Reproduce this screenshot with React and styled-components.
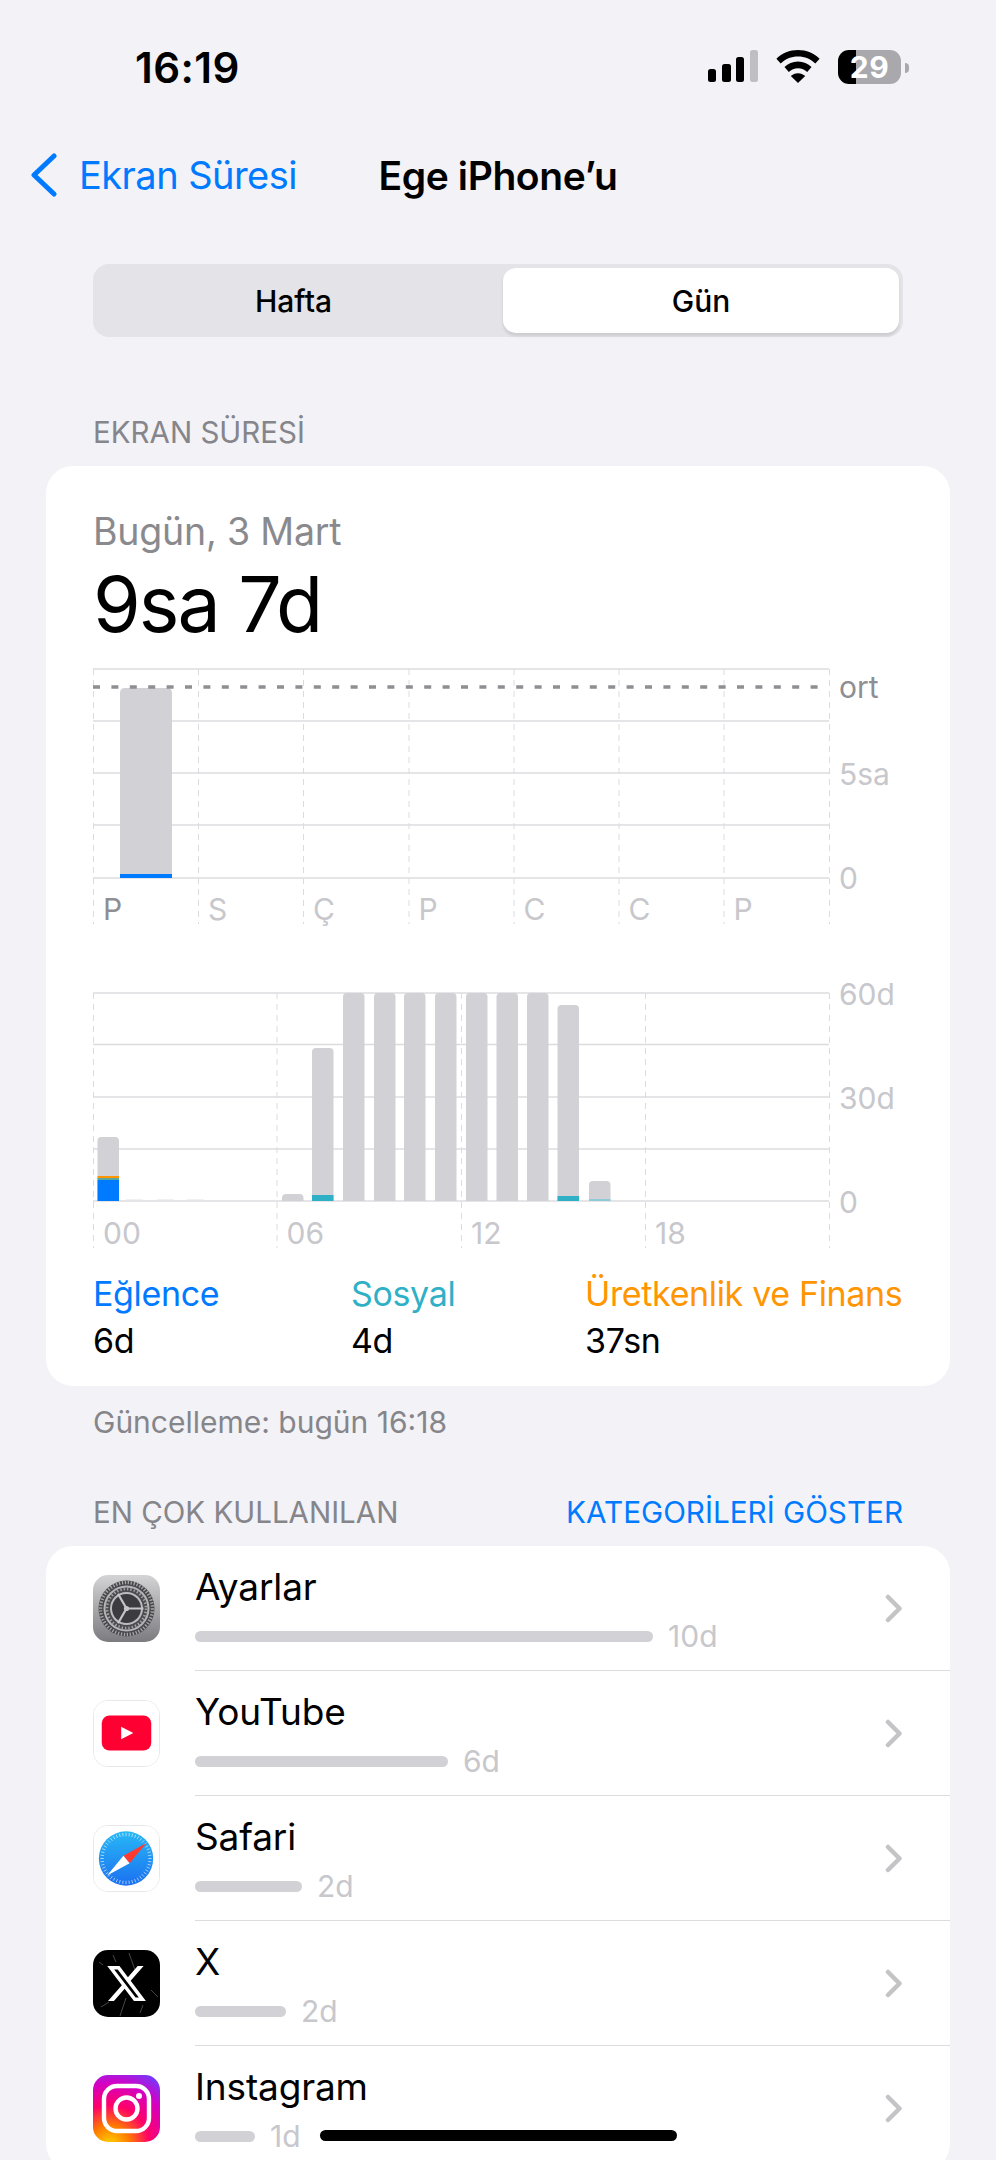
import React from "react";
import styled, { createGlobalStyle } from "styled-components";
import { FaXTwitter } from "react-icons/fa6";

const BLUE = "#007aff";
const TEAL = "#30b0c7";
const ORANGE = "#ff9500";
const BAR = "#d1d1d6";
const GRID = "#dcdcdf";
const AXIS = "#c7c7cc";

const GlobalStyle = createGlobalStyle`
  html, body {
    margin: 0;
    padding: 0;
    background: #f2f2f7;
  }
  body {
    font-family: Inter, "Liberation Sans", sans-serif;
  }
`;

const Page = styled.div`
  position: relative;
  width: 996px;
  height: 2160px;
  overflow: hidden;
  background: #f2f2f7;
  color: #000;
`;

const StatusBar = styled.div`
  height: 134px;
  box-sizing: border-box;
  padding: 0 87px 0 135px;
  display: flex;
  align-items: center;
  justify-content: space-between;
`;

const Clock = styled.div`
  font-size: 42px;
  font-weight: 600;
  letter-spacing: 0.4px;
`;

const StatusIcons = styled.div`
  display: flex;
  align-items: center;
  gap: 18px;
  margin-top: -1px;
`;

const Battery = styled.div`
  position: relative;
  width: 63px;
  height: 34px;
  margin-right: 8px;
  border-radius: 11px;
  background: linear-gradient(90deg, #000 0 18px, #a9a9ad 18px);
  color: #fff;
  font-size: 30px;
  font-weight: 700;
  line-height: 34px;
  text-align: center;
  letter-spacing: 0.5px;

  &::after {
    content: "";
    position: absolute;
    right: -8px;
    top: 13px;
    width: 4px;
    height: 10px;
    border-radius: 0 4px 4px 0;
    background: #a9a9ad;
  }
`;

const Nav = styled.div`
  height: 82px;
  display: grid;
  grid-template-columns: 1fr auto 1fr;
  align-items: center;
`;

const BackLink = styled.div`
  display: flex;
  align-items: center;
  gap: 22px;
  padding-left: 30px;
  color: ${BLUE};
  font-size: 38px;
  letter-spacing: -0.55px;
  white-space: nowrap;
`;

const NavTitle = styled.div`
  font-size: 39px;
  font-weight: 600;
  letter-spacing: -0.4px;
`;

const Segmented = styled.div`
  margin: 48px 93px 0;
  height: 73px;
  box-sizing: border-box;
  padding: 4px;
  display: grid;
  grid-template-columns: 1fr 396px;
  gap: 4px;
  border-radius: 16px;
  background: #e3e3e8;
`;

const Segment = styled.div`
  display: flex;
  align-items: center;
  justify-content: center;
  padding-right: ${(p) => (p.$active ? 0 : 9)}px;
  border-radius: 13px;
  font-size: 30px;
  font-weight: 500;
  background: ${(p) => (p.$active ? "#fff" : "transparent")};
  box-shadow: ${(p) => (p.$active ? "0 3px 3px rgba(0,0,0,0.1)" : "none")};
`;

const SectionHeader = styled.div`
  margin: ${(p) => p.$top}px 93px 14px;
  height: 40px;
  display: flex;
  align-items: center;
  justify-content: space-between;
  color: #85858a;
  font-size: 29.5px;
`;

const HeaderLink = styled.span`
  color: ${BLUE};
  font-size: 29.7px;
`;

const Card = styled.div`
  margin: 0 46px;
  background: #fff;
  border-radius: 27px;
  overflow: hidden;
`;

const SummaryCard = styled(Card)`
  padding: 44px 47px 22px;
`;

const DateLine = styled.div`
  color: #8a8a8e;
  font-size: 37.5px;
  line-height: 44px;
  letter-spacing: -0.2px;
`;

const Total = styled.div`
  margin-top: 5px;
  font-size: 77px;
  line-height: 90px;
  letter-spacing: -2px;
`;

const ChartSvg = styled.svg`
  display: block;
  width: 836px;
  height: 262px;
  margin-top: ${(p) => p.$top}px;
  overflow: visible;
  font-family: Inter, "Liberation Sans", sans-serif;
`;

const Legend = styled.div`
  margin-top: 21px;
  display: grid;
  grid-template-columns: 258px 234px auto;
`;

const LegendLabel = styled.div`
  color: ${(p) => p.$color};
  font-size: 34px;
  line-height: 46px;
  letter-spacing: -0.35px;
  white-space: nowrap;
`;

const LegendValue = styled.div`
  margin-top: 1px;
  font-size: 34px;
  line-height: 46px;
  letter-spacing: -0.35px;
`;

const Updated = styled.div`
  margin: 16px 93px 0;
  color: #85858a;
  font-size: 30px;
  line-height: 40px;
`;

const Row = styled.div`
  display: flex;
  align-items: center;
  gap: 35px;
  height: 125px;
  padding-left: 47px;
`;

const IconBox = styled.div`
  flex: none;
  width: 67px;
  height: 67px;
  box-sizing: border-box;
  border-radius: 15px;
  overflow: hidden;
  border: ${(p) => (p.$outlined ? "1px solid #e8e8ea" : "none")};

  > svg {
    display: block;
    width: 100%;
    height: 100%;
  }
`;

const RowBody = styled.div`
  flex: 1;
  align-self: stretch;
  display: flex;
  align-items: center;
  justify-content: space-between;
  padding-right: 46px;
  border-bottom: 1.5px solid #dcdcdf;
  box-sizing: border-box;
`;

const RowText = styled.div`
  align-self: flex-start;
  padding-top: 19px;
`;

const AppName = styled.div`
  font-size: 37px;
  line-height: 44px;
  letter-spacing: -0.15px;
`;

const Usage = styled.div`
  margin-top: 7px;
  height: 40px;
  display: flex;
  align-items: center;
  gap: 15px;
`;

const UsageBar = styled.div`
  width: ${(p) => p.$width}px;
  height: 11px;
  border-radius: 6px;
  background: ${BAR};
`;

const UsageValue = styled.div`
  color: ${AXIS};
  font-size: 30px;
`;

const HomeIndicator = styled.div`
  position: absolute;
  left: 320px;
  top: 2130px;
  width: 357px;
  height: 11px;
  border-radius: 6px;
  background: #000;
`;

const SignalIcon = () => (
  <svg width="50" height="33" viewBox="0 0 50 33">
    <rect x="0" y="19" width="8" height="13" rx="2.5" />
    <rect x="14" y="14" width="9" height="18" rx="2.5" />
    <rect x="28" y="7" width="8" height="25" rx="2.5" />
    <rect x="42" y="0" width="8" height="32" rx="2.5" fill="#bfbfc3" />
  </svg>
);

const WifiIcon = () => (
  <svg width="44" height="33" viewBox="0 0 44 33">
    <path d="M22 0C13.6 0 6 3.3.4 8.7l4.3 4.9C9.2 9.2 15.3 6.6 22 6.6s12.8 2.6 17.3 7l4.3-4.9C38 3.3 30.4 0 22 0z" />
    <path d="M22 11.6c-5.3 0-10 2.1-13.5 5.5l4.3 4.9c2.4-2.3 5.6-3.7 9.2-3.7s6.8 1.4 9.2 3.7l4.3-4.9C32 13.7 27.3 11.6 22 11.6z" />
    <path d="M22 23.2c-2.8 0-5.3 1.1-7.2 2.9L22 33l7.2-6.9c-1.9-1.8-4.4-2.9-7.2-2.9z" />
  </svg>
);

const BackChevron = () => (
  <svg width="27" height="44" viewBox="0 0 27 44">
    <path d="M24 3 4 22l20 19" fill="none" stroke={BLUE} strokeWidth="5" strokeLinecap="round" strokeLinejoin="round" />
  </svg>
);

const RowChevron = () => (
  <svg width="22" height="30" viewBox="0 0 22 30">
    <path d="M6 4l11.5 11.5L6 27" fill="none" stroke="#c4c4c7" strokeWidth="4.5" strokeLinecap="round" strokeLinejoin="round" />
  </svg>
);

const SettingsIcon = () => {
  const spokes = [0, 120, 240];
  return (
    <svg viewBox="0 0 67 67">
      <defs>
        <linearGradient id="settingsBg" x1="0" y1="0" x2="0" y2="1">
          <stop offset="0" stopColor="#d4d4d6" />
          <stop offset="1" stopColor="#7c7c80" />
        </linearGradient>
      </defs>
      <rect width="67" height="67" fill="url(#settingsBg)" />
      <circle cx="33.5" cy="33.5" r="28" fill="#47474b" />
      <circle cx="33.5" cy="33.5" r="26" fill="none" stroke="#a8a8ac" strokeWidth="3.4" strokeDasharray="1.3 1.7" />
      <circle cx="33.5" cy="33.5" r="23" fill="#b5b5b8" />
      <circle cx="33.5" cy="33.5" r="21" fill="#4c4c50" />
      <circle cx="33.5" cy="33.5" r="19.5" fill="none" stroke="#a4a4a8" strokeWidth="2.6" strokeDasharray="1.4 2" />
      <circle cx="33.5" cy="33.5" r="16.5" fill="#bdbdc0" />
      <circle cx="33.5" cy="33.5" r="14.5" fill="#3c3c40" />
      {spokes.map((a) => (
        <line
          key={a}
          x1="33.5"
          y1="33.5"
          x2={33.5 + 17 * Math.cos((a * Math.PI) / 180)}
          y2={33.5 - 17 * Math.sin((a * Math.PI) / 180)}
          stroke="#c6c6ca"
          strokeWidth="2.2"
        />
      ))}
      <circle cx="33.5" cy="33.5" r="2.6" fill="#c6c6ca" />
    </svg>
  );
};

const YoutubeIcon = () => (
  <svg viewBox="0 0 67 67">
    <rect width="67" height="67" fill="#fff" />
    <rect x="8" y="15" width="51" height="36" rx="8" fill="#ff0033" />
    <path d="M28 26.5v13l12.5-6.5z" fill="#fff" />
  </svg>
);

const SafariIcon = () => {
  const ticks = Array.from({ length: 48 }, (_, i) => (i * 2 * Math.PI) / 48);
  return (
    <svg viewBox="0 0 67 67">
      <defs>
        <linearGradient id="safariBg" x1="0" y1="0" x2="0" y2="1">
          <stop offset="0" stopColor="#28b8f6" />
          <stop offset="1" stopColor="#1b70f0" />
        </linearGradient>
      </defs>
      <rect width="67" height="67" fill="#fff" />
      <circle cx="33" cy="33.5" r="28" fill="url(#safariBg)" />
      {ticks.map((t, i) => (
        <line
          key={i}
          x1={33 + 26.5 * Math.cos(t)}
          y1={33.5 + 26.5 * Math.sin(t)}
          x2={33 + 23 * Math.cos(t)}
          y2={33.5 + 23 * Math.sin(t)}
          stroke="#fff"
          strokeOpacity="0.75"
          strokeWidth="0.8"
        />
      ))}
      <path d="M54 17.5 36.7 38.3 30.3 30.7z" fill="#ff3b30" />
      <path d="M13.5 51 30.3 30.7 36.7 38.3z" fill="#fff" />
    </svg>
  );
};

const XIcon = () => (
  <svg viewBox="0 0 67 67">
    <rect width="67" height="67" fill="#000" />
    <path
      d="M36 3l6 17M33 48l-6 18M58 40l7 7M8 57l8-5M20 5l3 7M50 55l-3 8M6 12l4 3"
      stroke="#77777a"
      strokeWidth="0.6"
      fill="none"
    />
    <FaXTwitter x="12" y="12" size={43} color="#fff" />
  </svg>
);

const InstagramIcon = () => (
  <svg viewBox="0 0 67 67">
    <defs>
      <radialGradient id="igBg" cx="0.25" cy="1.05" r="1.2">
        <stop offset="0" stopColor="#ffd600" />
        <stop offset="0.25" stopColor="#ff7a00" />
        <stop offset="0.5" stopColor="#ff0069" />
        <stop offset="0.78" stopColor="#d300c5" />
        <stop offset="1" stopColor="#7638fa" />
      </radialGradient>
    </defs>
    <rect width="67" height="67" fill="url(#igBg)" />
    <rect x="11" y="11" width="45" height="45" rx="13" fill="none" stroke="#fff" strokeWidth="4.4" />
    <circle cx="33.5" cy="33.5" r="11" fill="none" stroke="#fff" strokeWidth="4.4" />
    <circle cx="46" cy="21" r="3" fill="#fff" />
  </svg>
);

// bar with rounded top corners, coordinates are the chart's own
const barPath = (x, top, w, bottom, r) =>
  `M${x} ${bottom}V${top + r}Q${x} ${top} ${x + r} ${top}H${x + w - r}Q${x + w} ${top} ${x + w} ${top + r}V${bottom}Z`;

const AxisText = ({ x, y, color = AXIS, children }) => (
  <text x={x} y={y} fill={color} fontSize="30" dominantBaseline="central">
    {children}
  </text>
);

const Grid = ({ rows, cols, bottom }) => (
  <g>
    {rows.map((y) => (
      <line key={y} x1="0" x2="736" y1={y} y2={y} stroke={GRID} strokeWidth="1.5" />
    ))}
    {cols.map((x) => (
      <line key={x} x1={x + 0.5} x2={x + 0.5} y1={rows[0]} y2={bottom} stroke={GRID} strokeWidth="1" strokeDasharray="6 5" />
    ))}
  </g>
);

const WeekChart = () => {
  const cols = [0, 105, 210, 315.5, 420.5, 525.5, 630.5, 736];
  const days = ["P", "S", "Ç", "P", "C", "C", "P"];
  return (
    <ChartSvg $top={15} viewBox="0 0 836 262">
      <Grid rows={[5, 57, 109, 161, 214]} cols={cols} bottom={260} />
      <path d={barPath(27, 24, 52, 214, 5)} fill={BAR} />
      <rect x="27" y="210" width="52" height="4" fill={BLUE} />
      <line x1="0" x2="736" y1="23" y2="23" stroke="#8e8e93" strokeWidth="3.6" strokeDasharray="7 11.4" />
      <AxisText x="746" y="23" color="#8e8e93">ort</AxisText>
      <AxisText x="746" y="110">5sa</AxisText>
      <AxisText x="746" y="214">0</AxisText>
      {days.map((d, i) => (
        <AxisText key={i} x={cols[i] + 10} y="245" color={i === 0 ? "#8e8e93" : AXIS}>{d}</AxisText>
      ))}
    </ChartSvg>
  );
};

const hourBars = [
  { x: 4.5, top: 149, segs: [[188, 2, ORANGE], [190, 2, "#5aa7a0"], [192, 21, BLUE]] },
  { x: 189, top: 206 },
  { x: 219, top: 60, segs: [[207, 6, TEAL]] },
  { x: 250, top: 5 },
  { x: 281, top: 5 },
  { x: 311, top: 5 },
  { x: 342, top: 5 },
  { x: 373, top: 5 },
  { x: 403.5, top: 5 },
  { x: 434, top: 5 },
  { x: 464.5, top: 17, segs: [[208, 5, TEAL]] },
  { x: 496, top: 193, segs: [[211, 2, "#8fcbd6"]] },
];

const DayChart = () => {
  const cols = [0, 183.5, 368, 552, 736];
  const hours = ["00", "06", "12", "18"];
  return (
    <ChartSvg $top={62} viewBox="0 0 836 262">
      <Grid rows={[5, 56.5, 109, 161, 213]} cols={cols} bottom={260} />
      {[33, 64, 94].map((x) => (
        <rect key={x} x={x} y="211.5" width="17" height="1.5" fill="#e4e4e6" />
      ))}
      {hourBars.map((b) => (
        <g key={b.x}>
          <path d={barPath(b.x, b.top, 21.5, 213, 4)} fill={BAR} />
          {(b.segs || []).map(([y, h, c]) => (
            <rect key={y} x={b.x} y={y} width="21.5" height={h} fill={c} />
          ))}
        </g>
      ))}
      <AxisText x="746" y="6">60d</AxisText>
      <AxisText x="746" y="110">30d</AxisText>
      <AxisText x="746" y="214">0</AxisText>
      {hours.map((h, i) => (
        <AxisText key={h} x={cols[i] + 10} y="245">{h}</AxisText>
      ))}
    </ChartSvg>
  );
};

const apps = [
  { name: "Ayarlar", bar: 458, value: "10d", Icon: SettingsIcon },
  { name: "YouTube", bar: 253, value: "6d", Icon: YoutubeIcon, outlined: true },
  { name: "Safari", bar: 107, value: "2d", Icon: SafariIcon, outlined: true },
  { name: "X", bar: 91, value: "2d", Icon: XIcon },
  { name: "Instagram", bar: 60, value: "1d", Icon: InstagramIcon },
];

const legend = [
  { label: "Eğlence", value: "6d", color: BLUE },
  { label: "Sosyal", value: "4d", color: TEAL },
  { label: "Üretkenlik ve Finans", value: "37sn", color: ORANGE },
];

export default function App() {
  return (
    <Page>
      <GlobalStyle />
      <StatusBar>
        <Clock>16:19</Clock>
        <StatusIcons>
          <SignalIcon />
          <WifiIcon />
          <Battery>29</Battery>
        </StatusIcons>
      </StatusBar>
      <Nav>
        <BackLink>
          <BackChevron />
          Ekran Süresi
        </BackLink>
        <NavTitle>Ege iPhone’u</NavTitle>
      </Nav>
      <Segmented>
        <Segment>Hafta</Segment>
        <Segment $active>Gün</Segment>
      </Segmented>
      <SectionHeader $top={75}>EKRAN SÜRESİ</SectionHeader>
      <SummaryCard>
        <DateLine>Bugün, 3 Mart</DateLine>
        <Total>9sa 7d</Total>
        <WeekChart />
        <DayChart />
        <Legend>
          {legend.map((l) => (
            <div key={l.label}>
              <LegendLabel $color={l.color}>{l.label}</LegendLabel>
              <LegendValue>{l.value}</LegendValue>
            </div>
          ))}
        </Legend>
      </SummaryCard>
      <Updated>Güncelleme: bugün 16:18</Updated>
      <SectionHeader $top={50}>
        EN ÇOK KULLANILAN
        <HeaderLink>KATEGORİLERİ GÖSTER</HeaderLink>
      </SectionHeader>
      <Card>
        {apps.map(({ name, bar, value, Icon, outlined }) => (
          <Row key={name}>
            <IconBox $outlined={outlined}>
              <Icon />
            </IconBox>
            <RowBody>
              <RowText>
                <AppName>{name}</AppName>
                <Usage>
                  <UsageBar $width={bar} />
                  <UsageValue>{value}</UsageValue>
                </Usage>
              </RowText>
              <RowChevron />
            </RowBody>
          </Row>
        ))}
      </Card>
      <HomeIndicator />
    </Page>
  );
}
